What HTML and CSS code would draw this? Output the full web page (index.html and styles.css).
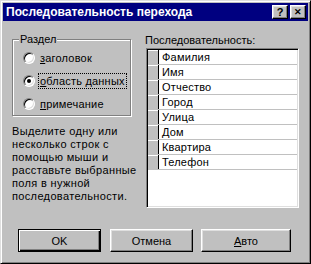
FILE: index.html
```html
<!DOCTYPE html>
<html lang="ru">
<head>
    <meta charset="UTF-8">
    <title>Последовательность перехода</title>
    <link rel="stylesheet" href="styles.css">
</head>
<body>
    <div class="window">
        <div class="titlebar">
            <span class="title">Последовательность перехода</span>
            <span class="cap-btn">?</span>
            <span class="cap-btn close">&#x2715;</span>
        </div>

        <div class="main">
            <div class="left">
                <div class="group">
                    <span class="group-title">Раздел</span>
                    <div class="radio-row">
                        <span class="radio"></span>
                        <span class="radio-label"><u>з</u>аголовок</span>
                    </div>
                    <div class="radio-row">
                        <span class="radio checked"></span>
                        <span class="radio-label focus"><u>о</u>бласть данных</span>
                    </div>
                    <div class="radio-row">
                        <span class="radio"></span>
                        <span class="radio-label"><u>п</u>римечание</span>
                    </div>
                </div>
                <p class="hint">Выделите одну или<br>несколько строк с<br>помощью мыши и<br>расставьте выбранные<br>поля в нужной<br>последовательности.</p>
            </div>

            <div class="right">
                <div class="list-label">Последовательность:</div>
                <div class="list">
                    <div class="row"><span class="sel"></span><span class="cell">Фамилия</span></div>
                    <div class="row"><span class="sel"></span><span class="cell">Имя</span></div>
                    <div class="row"><span class="sel"></span><span class="cell">Отчество</span></div>
                    <div class="row"><span class="sel"></span><span class="cell">Город</span></div>
                    <div class="row"><span class="sel"></span><span class="cell">Улица</span></div>
                    <div class="row"><span class="sel"></span><span class="cell">Дом</span></div>
                    <div class="row"><span class="sel"></span><span class="cell">Квартира</span></div>
                    <div class="row"><span class="sel"></span><span class="cell">Телефон</span></div>
                </div>
            </div>
        </div>

        <div class="buttons">
            <button class="btn default">OK</button>
            <button class="btn">Отмена</button>
            <button class="btn wide"><u>А</u>вто</button>
        </div>
    </div>
</body>
</html>
```

FILE: styles.css
```css
body {
    margin: 0;
    background: #c0c0c0;
    font-family: "Liberation Sans", Arial, sans-serif;
    font-size: 11px;
    color: #000;
}
.window {
    width: 311px;
    height: 264px;
    box-sizing: border-box;
    background: #c0c0c0;
    border: 1px solid;
    border-color: #dfdfdf #000 #000 #dfdfdf;
    box-shadow: inset 1px 1px #fff, inset -1px -1px #808080;
    padding: 2px;
}
.titlebar {
    height: 18px;
    background: #000080;
    color: #fff;
    display: flex;
    align-items: center;
    padding: 0 2px 0 2px;
}
.title {
    flex: 1;
    font-weight: bold;
    font-size: 12px;
    padding-left: 1px;
}
.cap-btn {
    width: 16px;
    height: 14px;
    box-sizing: border-box;
    background: #c0c0c0;
    color: #000;
    border: 1px solid;
    border-color: #fff #000 #000 #fff;
    box-shadow: inset -1px -1px #808080, inset 1px 1px #dfdfdf;
    display: flex;
    align-items: center;
    justify-content: center;
    font-weight: bold;
    font-size: 11px;
    line-height: 1;
}
.close {
    margin-left: 2px;
    font-size: 9px;
}
.main {
    display: flex;
    padding: 13px 0 0 9px;
}
.left {
    width: 122px;
}
.group {
    position: relative;
    margin-top: 5px;
    width: 119px;
    height: 77px;
    box-sizing: border-box;
    border: 1px solid #808080;
    box-shadow: inset 1px 1px #fff, 1px 1px #fff;
    padding: 6px 0 0 10px;
}
.group-title {
    position: absolute;
    top: -8px;
    left: 6px;
    background: #c0c0c0;
    padding: 0 1px;
    line-height: 14px;
}
.radio-row {
    height: 23px;
    display: flex;
    align-items: center;
}
.radio {
    flex: none;
    width: 12px;
    height: 12px;
    box-sizing: border-box;
    border-radius: 50%;
    background: #fff;
    border: 1px solid;
    border-color: #808080 #fff #fff #808080;
    box-shadow: inset 1px 1px #000, inset -1px -1px #dfdfdf;
    display: flex;
    align-items: center;
    justify-content: center;
}
.radio.checked::after {
    content: "";
    width: 4px;
    height: 4px;
    border-radius: 50%;
    background: #000;
}
.radio-label {
    margin-left: 3px;
    padding: 0 1px;
    line-height: 14px;
    border: 1px solid transparent;
    letter-spacing: 0.2px;
}
.focus {
    border: 1px dotted #000;
}
.hint {
    margin: 9px 0 0 0;
    line-height: 13px;
    letter-spacing: 0.35px;
    white-space: nowrap;
}
.right {
    margin-left: 11px;
}
.list-label {
    line-height: 13px;
    margin-bottom: 1px;
}
.list {
    margin-left: 1px;
    width: 153px;
    height: 160px;
    box-sizing: border-box;
    background: #fff;
    border: 1px solid;
    border-color: #808080 #fff #fff #808080;
    box-shadow: inset 1px 1px #000, inset -1px -1px #dfdfdf;
    padding: 1px;
}
.row {
    display: flex;
    height: 14px;
    border-bottom: 1px solid #c0c0c0;
}
.sel {
    flex: none;
    width: 11px;
    height: 14px;
    background: #c0c0c0;
    border-right: 1px solid #000;
    box-shadow: inset 0 1px #fff;
    box-sizing: border-box;
}
.cell {
    padding-left: 3px;
    line-height: 14px;
    letter-spacing: 0.2px;
}
.buttons {
    display: flex;
    padding: 21px 0 0 15px;
}
.btn {
    height: 23px;
    width: 83px;
    box-sizing: border-box;
    margin: 0 8px 0 0;
    padding: 0;
    font-family: "Liberation Sans", Arial, sans-serif;
    font-size: 11px;
    color: #000;
    background: #c0c0c0;
    border: 1px solid;
    border-color: #fff #000 #000 #fff;
    box-shadow: inset -1px -1px #808080, inset 1px 1px #dfdfdf;
}
.btn.default {
    border: 1px solid #000;
    box-shadow: inset 1px 1px #fff, inset -1px -1px #000, inset -2px -2px #808080;
    margin-right: 9px;
}
.btn.wide {
    width: 90px;
}
```
